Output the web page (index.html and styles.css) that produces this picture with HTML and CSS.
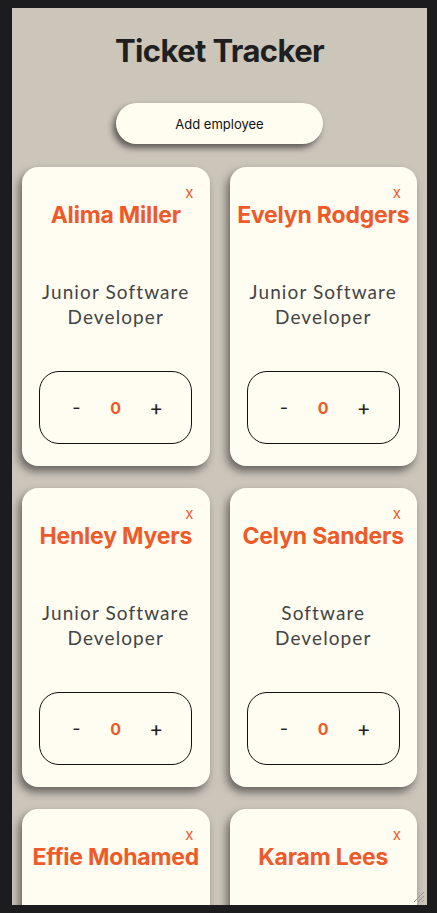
FILE: index.html
```html
<!DOCTYPE html>
<html>
<head>
<meta charset="utf-8">
<link rel="stylesheet" href="styles.css">
</head>
<body>
<div class="frame">
  <div class="app">
    <h1 class="title">Ticket Tracker</h1>
    <div class="actions"><button class="add-btn">Add employee</button></div>
    <div class="grid">
      <div class="card">
        <div class="close">x</div>
        <div class="name">Alima Miller</div>
        <div class="role">Junior Software Developer</div>
        <div class="counter"><span class="op">-</span><span class="count">0</span><span class="op plus">+</span></div>
      </div>
      <div class="card">
        <div class="close">x</div>
        <div class="name">Evelyn Rodgers</div>
        <div class="role">Junior Software Developer</div>
        <div class="counter"><span class="op">-</span><span class="count">0</span><span class="op plus">+</span></div>
      </div>
      <div class="card">
        <div class="close">x</div>
        <div class="name">Henley Myers</div>
        <div class="role">Junior Software Developer</div>
        <div class="counter"><span class="op">-</span><span class="count">0</span><span class="op plus">+</span></div>
      </div>
      <div class="card">
        <div class="close">x</div>
        <div class="name">Celyn Sanders</div>
        <div class="role">Software Developer</div>
        <div class="counter"><span class="op">-</span><span class="count">0</span><span class="op plus">+</span></div>
      </div>
      <div class="card">
        <div class="close">x</div>
        <div class="name">Effie Mohamed</div>
        <div class="role">Junior Software Developer</div>
        <div class="counter"><span class="op">-</span><span class="count">0</span><span class="op plus">+</span></div>
      </div>
      <div class="card">
        <div class="close">x</div>
        <div class="name">Karam Lees</div>
        <div class="role">Junior Software Developer</div>
        <div class="counter"><span class="op">-</span><span class="count">0</span><span class="op plus">+</span></div>
      </div>
    </div>
  </div>
  <svg class="grip" width="12" height="12" viewBox="0 0 12 12">
    <line x1="11" y1="1" x2="1" y2="11" stroke="#9a958d" stroke-width="1"/>
    <line x1="11" y1="5" x2="5" y2="11" stroke="#9a958d" stroke-width="1"/>
    <line x1="11" y1="9" x2="9" y2="11" stroke="#9a958d" stroke-width="1"/>
  </svg>
</div>
</body>
</html>
```

FILE: styles.css
```css
html, body {
  margin: 0;
  padding: 0;
  height: 100%;
  background: #1c1c1f;
}
body {
  padding: 8px 10px 8px 12px;
  box-sizing: border-box;
}
.frame {
  position: relative;
  height: 897px;
  background: #cbc5ba;
  overflow: hidden;
}
.app {
  height: 100%;
  overflow: hidden;
  padding: 0 10px;
  box-sizing: border-box;
  font-family: Inter, "Liberation Sans", sans-serif;
}
.title {
  margin: 0;
  padding-top: 23px;
  font-size: 31px;
  line-height: 39px;
  font-weight: 700;
  color: #1f1f1f;
  text-align: center;
  letter-spacing: -0.6px;
}
.actions {
  display: flex;
  justify-content: center;
  margin-top: 33px;
}
.add-btn {
  width: 207px;
  height: 41px;
  border: none;
  border-radius: 21px;
  background: #fffcf0;
  font-family: Inter, "Liberation Sans", sans-serif;
  font-size: 13px;
  color: #111;
  box-shadow: -3px 4px 6px rgba(0, 0, 0, 0.55);
}
.grid {
  margin-top: 23px;
  display: grid;
  grid-template-columns: 1fr 1fr;
  column-gap: 20px;
  row-gap: 22px;
}
.card {
  position: relative;
  height: 299px;
  background: #fffdf1;
  border-radius: 16px;
  box-shadow: -3px 5px 8px rgba(0, 0, 0, 0.5);
  display: flex;
  flex-direction: column;
  align-items: center;
  padding: 18px 0 0;
  box-sizing: border-box;
}
.close {
  align-self: flex-end;
  margin-right: 16px;
  font-size: 15px;
  line-height: 16px;
  color: #ee5a2a;
}
.name {
  margin-top: 0;
  font-size: 23px;
  line-height: 28px;
  font-weight: 700;
  color: #ee5a2a;
  white-space: nowrap;
  letter-spacing: -0.2px;
}
.role {
  margin-top: 50px;
  width: 175px;
  font-family: Lato, "Noto Sans", sans-serif;
  font-size: 19px;
  line-height: 25px;
  color: #444;
  text-align: center;
  letter-spacing: 1.1px;
  height: 50px;
}
.counter {
  margin-top: 42px;
  width: 153px;
  height: 73px;
  box-sizing: border-box;
  border: 1px solid #111;
  border-radius: 20px;
  display: flex;
  justify-content: center;
  align-items: center;
  gap: 28px;
  font-size: 18px;
}
.op {
  color: #222;
  width: 12px;
  text-align: center;
}
.plus {
  font-size: 21px;
}
.count {
  color: #ee5a2a;
  font-weight: 700;
  font-size: 16px;
}
.grip {
  position: absolute;
  right: 2px;
  bottom: 2px;
}
```
